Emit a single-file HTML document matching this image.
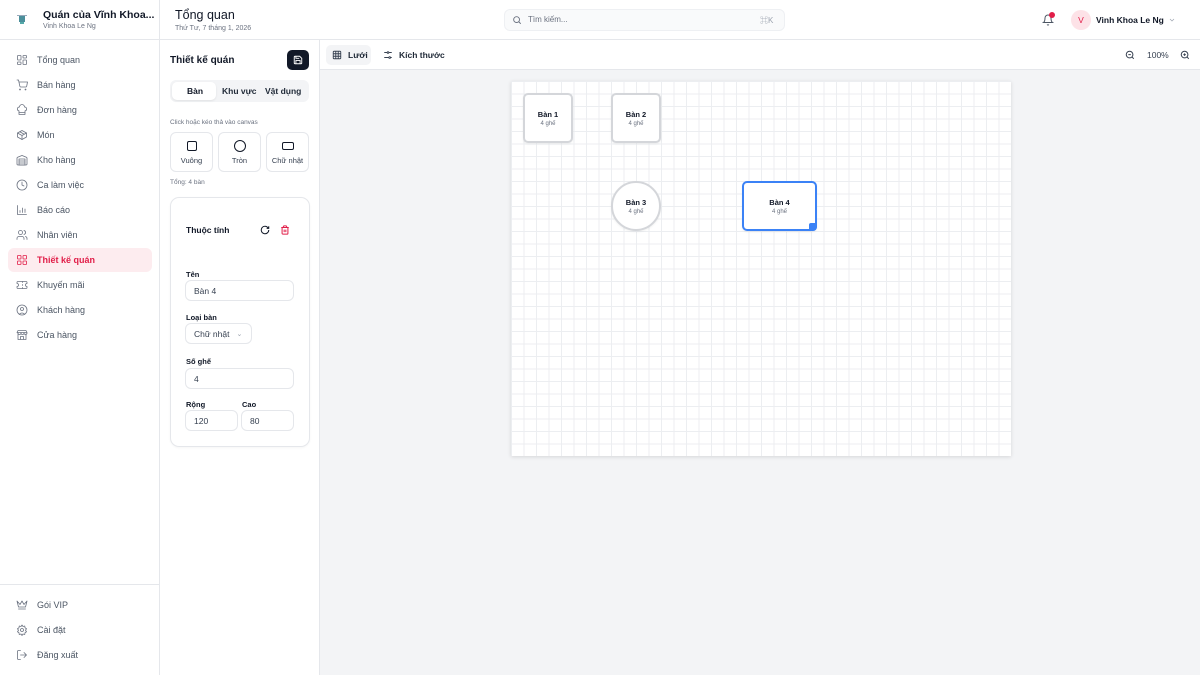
<!DOCTYPE html>
<html><head><meta charset="utf-8"><style>
*{box-sizing:border-box;margin:0;padding:0}
body{width:1200px;height:675px;overflow:hidden;font-family:"Liberation Sans","Noto Sans CJK SC",sans-serif;background:#f3f4f6;color:#111827;position:relative}
.abs{position:absolute;white-space:nowrap}
svg{display:block}
.side{left:0;top:0;width:160px;height:675px;background:#fff;border-right:1px solid #e5e7eb}
.nav{position:absolute;left:8px;width:144px;height:24px;border-radius:6px;display:flex;align-items:center;padding-left:8px;font-size:9px;color:#4b5563}
.nav svg{width:12px;height:12px;margin-right:9px;stroke:#6b7280;fill:none;stroke-width:1.6;stroke-linecap:round;stroke-linejoin:round}
.nav.act{background:#fdecef;color:#e11d48;font-weight:bold}
.nav.act svg{stroke:#e11d48}
.panel{left:160px;top:40px;width:160px;height:635px;background:#fff;border-right:1px solid #e5e7eb}
.inp{position:absolute;height:21px;border:1px solid #e5e7eb;border-radius:6px;font-size:8.5px;padding-left:8px;display:flex;align-items:center;color:#374151;background:#fff}
.lbl{position:absolute;font-size:7.5px;font-weight:bold;color:#111827}
.tb{position:absolute;background:#fff;border:2px solid #d4d6da;border-radius:5px;display:flex;flex-direction:column;align-items:center;justify-content:center;box-shadow:0 1px 2px rgba(0,0,0,.06)}
.tb b{font-size:7.5px;color:#111827}
.tb span{font-size:6px;color:#6b7280;margin-top:2px}
</style></head><body>
<div class="abs side">
  <div class="abs" style="left:16px;top:13px;width:12px;height:12px;">
    <svg width="12" height="12" viewBox="0 0 12 12"><rect x="3" y="3" width="6" height="6" fill="#4b8f9b"/><rect x="1" y="2" width="10" height="1" fill="#9ab"/><rect x="4" y="9" width="4" height="2" fill="#5aa"/></svg>
  </div>
  <div class="abs" style="left:43px;top:9px;font-size:10.5px;font-weight:bold;color:#111827">Quán của Vĩnh Khoa...</div>
  <div class="abs" style="left:43px;top:23px;font-size:7px;color:#6b7280">Vinh Khoa Le Ng</div>
  <div class="abs" style="left:0;top:39px;width:160px;height:1px;background:#e5e7eb"></div>

  <div class="nav" style="top:48px"><svg viewBox="0 0 24 24"><rect x="3" y="3" width="7" height="9" rx="1"/><rect x="14" y="3" width="7" height="5" rx="1"/><rect x="14" y="12" width="7" height="9" rx="1"/><rect x="3" y="16" width="7" height="5" rx="1"/></svg>Tổng quan</div>
  <div class="nav" style="top:73px"><svg viewBox="0 0 24 24"><circle cx="8" cy="21" r="1"/><circle cx="19" cy="21" r="1"/><path d="M2 2h3l2.7 12.4a2 2 0 0 0 2 1.6h9.7a2 2 0 0 0 2-1.6L23 6H6"/></svg>Bán hàng</div>
  <div class="nav" style="top:98px"><svg viewBox="0 0 24 24"><path d="M6 13.9A4 4 0 0 1 7 6a5 5 0 0 1 10 0 4 4 0 0 1 1 7.9V21H6z"/><path d="M6 17h12"/></svg>Đơn hàng</div>
  <div class="nav" style="top:123px"><svg viewBox="0 0 24 24"><path d="M21 8l-9-5-9 5v8l9 5 9-5z"/><path d="M3 8l9 5 9-5M12 13v8M7.5 5.5l9 5"/></svg>Món</div>
  <div class="nav" style="top:148px"><svg viewBox="0 0 24 24"><path d="M22 8.35V20a2 2 0 0 1-2 2H4a2 2 0 0 1-2-2V8.35A2 2 0 0 1 3.26 6.5l8-3.2a2 2 0 0 1 1.48 0l8 3.2A2 2 0 0 1 22 8.35z"/><path d="M6 18h12M6 14h12M6 10h12v12H6z"/></svg>Kho hàng</div>
  <div class="nav" style="top:173px"><svg viewBox="0 0 24 24"><circle cx="12" cy="12" r="10"/><path d="M12 6v6l4 2"/></svg>Ca làm việc</div>
  <div class="nav" style="top:198px"><svg viewBox="0 0 24 24"><path d="M3 3v18h18M8 17v-4M13 17V8M18 17v-7"/></svg>Báo cáo</div>
  <div class="nav" style="top:223px"><svg viewBox="0 0 24 24"><circle cx="9" cy="7" r="4"/><path d="M2 21v-2a4 4 0 0 1 4-4h6a4 4 0 0 1 4 4v2M16 3.1a4 4 0 0 1 0 7.8M22 21v-2a4 4 0 0 0-3-3.9"/></svg>Nhân viên</div>
  <div class="nav act" style="top:248px"><svg viewBox="0 0 24 24"><rect x="3" y="3" width="7" height="7" rx="1"/><rect x="14" y="3" width="7" height="7" rx="1"/><rect x="3" y="14" width="7" height="7" rx="1"/><rect x="14" y="14" width="7" height="7" rx="1"/></svg>Thiết kế quán</div>
  <div class="nav" style="top:273px"><svg viewBox="0 0 24 24"><path d="M2 9a3 3 0 0 1 0 6v2a2 2 0 0 0 2 2h16a2 2 0 0 0 2-2v-2a3 3 0 0 1 0-6V7a2 2 0 0 0-2-2H4a2 2 0 0 0-2 2z"/><path d="M13 5v2M13 17v2M13 11v2"/></svg>Khuyến mãi</div>
  <div class="nav" style="top:298px"><svg viewBox="0 0 24 24"><circle cx="12" cy="12" r="10"/><circle cx="12" cy="10" r="3"/><path d="M7 20.7a6 6 0 0 1 10 0"/></svg>Khách hàng</div>
  <div class="nav" style="top:323px"><svg viewBox="0 0 24 24"><path d="M2 7l2-4h16l2 4M4 10v11h16V10M2 7h20v1a3 3 0 0 1-6 0 3 3 0 0 1-6 0 3 3 0 0 1-6 0 3 3 0 0 1-2-1M9 21v-6h6v6"/></svg>Cửa hàng</div>

  <div class="abs" style="left:0;top:584px;width:160px;height:1px;background:#e5e7eb"></div>
  <div class="nav" style="top:593px"><svg viewBox="0 0 24 24"><path d="M2 4l3 12h14l3-12-6 7-4-7-4 7zM5 20h14"/></svg>Gói VIP</div>
  <div class="nav" style="top:618px"><svg viewBox="0 0 24 24"><circle cx="12" cy="12" r="3"/><path d="M12 2l2 3 3.5-1 .5 3.5 3 2-2 3 2 3-3 2-.5 3.5-3.5-1-2 3-2-3-3.5 1L6 17.5l-3-2 2-3-2-3 3-2L6.5 4 10 5z"/></svg>Cài đặt</div>
  <div class="nav" style="top:643px"><svg viewBox="0 0 24 24"><path d="M9 21H5a2 2 0 0 1-2-2V5a2 2 0 0 1 2-2h4M16 17l5-5-5-5M21 12H9"/></svg>Đăng xuất</div>
</div>

<!-- header -->
<div class="abs" style="left:160px;top:0;width:1040px;height:40px;background:#fff;border-bottom:1px solid #e5e7eb"></div>
<div class="abs" style="left:175px;top:8px;font-size:12.5px;color:#111827">Tổng quan</div>
<div class="abs" style="left:175px;top:25px;font-size:7px;color:#6b7280">Thứ Tư, 7 tháng 1, 2026</div>
<div class="abs" style="left:504px;top:9px;width:281px;height:22px;border:1px solid #eef0f3;border-radius:6px;background:#f9fafb"></div>
<svg class="abs" style="left:512px;top:15px" width="10" height="10" viewBox="0 0 24 24" fill="none" stroke="#6b7280" stroke-width="2.2"><circle cx="11" cy="11" r="7"/><path d="M21 21l-4.5-4.5"/></svg>
<div class="abs" style="left:528px;top:15px;font-size:8px;color:#6b7280">Tìm kiếm...</div>
<div class="abs" style="left:760px;top:15px;font-size:8px;color:#9ca3af">⌘K</div>
<svg class="abs" style="left:1042px;top:14px" width="12" height="12" viewBox="0 0 24 24" fill="none" stroke="#4b5563" stroke-width="2"><path d="M6 8a6 6 0 0 1 12 0c0 7 3 9 3 9H3s3-2 3-9M10.3 21a1.9 1.9 0 0 0 3.4 0"/></svg>
<div class="abs" style="left:1049px;top:12px;width:6px;height:6px;border-radius:50%;background:#e11d48"></div>
<div class="abs" style="left:1071px;top:10px;width:20px;height:20px;border-radius:50%;background:#fde2e7;color:#e11d48;font-size:8.5px;display:flex;align-items:center;justify-content:center">V</div>
<div class="abs" style="left:1096px;top:15px;font-size:8.5px;font-weight:bold;color:#111827">Vinh Khoa Le Ng</div>
<svg class="abs" style="left:1168px;top:16px" width="8" height="8" viewBox="0 0 24 24" fill="none" stroke="#9ca3af" stroke-width="2"><path d="M6 9l6 6 6-6"/></svg>

<!-- panel -->
<div class="abs panel">
  <div class="abs" style="left:10px;top:15px;font-size:10px;font-weight:bold">Thiết kế quán</div>
  <div class="abs" style="left:127px;top:10px;width:22px;height:20px;background:#111827;border-radius:5px;display:flex;align-items:center;justify-content:center"><svg width="10" height="10" viewBox="0 0 24 24" fill="none" stroke="#fff" stroke-width="2.2"><path d="M19 21H5a2 2 0 0 1-2-2V5a2 2 0 0 1 2-2h11l5 5v11a2 2 0 0 1-2 2z"/><path d="M17 21v-8H7v8M7 3v5h8"/></svg></div>
  <div class="abs" style="left:10px;top:40px;width:139px;height:22px;background:#f3f4f6;border-radius:6px"></div>
  <div class="abs" style="left:12px;top:42px;width:44px;height:18px;background:#fff;border-radius:5px;box-shadow:0 1px 2px rgba(0,0,0,.08)"></div>
  <div class="abs" style="left:27px;top:46px;font-size:8.5px;font-weight:bold">Bàn</div>
  <div class="abs" style="left:62px;top:46px;font-size:8.5px;font-weight:bold;color:#1f2937">Khu vực</div>
  <div class="abs" style="left:105px;top:46px;font-size:8.5px;font-weight:bold;color:#1f2937">Vật dụng</div>
  <div class="abs" style="left:10px;top:79px;font-size:6.5px;color:#6b7280">Click hoặc kéo thả vào canvas</div>
  <div class="abs" style="left:10px;top:92px;width:43px;height:40px;border:1px solid #e5e7eb;border-radius:6px"></div>
  <div class="abs" style="left:58px;top:92px;width:43px;height:40px;border:1px solid #e5e7eb;border-radius:6px"></div>
  <div class="abs" style="left:106px;top:92px;width:43px;height:40px;border:1px solid #e5e7eb;border-radius:6px"></div>
  <div class="abs" style="left:27px;top:101px;width:10px;height:10px;border:1.3px solid #111827;border-radius:2px"></div>
  <div class="abs" style="left:74px;top:100px;width:12px;height:12px;border:1.3px solid #111827;border-radius:50%"></div>
  <div class="abs" style="left:122px;top:102px;width:12px;height:8px;border:1.3px solid #111827;border-radius:2px"></div>
  <div class="abs" style="left:10px;top:116px;width:43px;text-align:center;font-size:7.5px;color:#374151">Vuông</div>
  <div class="abs" style="left:58px;top:116px;width:43px;text-align:center;font-size:7.5px;color:#374151">Tròn</div>
  <div class="abs" style="left:106px;top:116px;width:43px;text-align:center;font-size:7.5px;color:#374151">Chữ nhật</div>
  <div class="abs" style="left:10px;top:139px;font-size:6.5px;color:#6b7280">Tổng: 4 bàn</div>

  <div class="abs" style="left:10px;top:157px;width:140px;height:250px;border:1px solid #e5e7eb;border-radius:9px;box-shadow:0 1px 2px rgba(0,0,0,.04)">
    <div class="abs" style="left:15px;top:27px;font-size:8.5px;font-weight:bold">Thuộc tính</div>
    <svg class="abs" style="left:89px;top:27px" width="10" height="10" viewBox="0 0 24 24" fill="none" stroke="#111827" stroke-width="2.4"><path d="M21 12a9 9 0 1 1-3-6.7L21 8M21 3v5h-5"/></svg>
    <svg class="abs" style="left:109px;top:27px" width="10" height="10" viewBox="0 0 24 24" fill="none" stroke="#e11d48" stroke-width="2.4"><path d="M3 6h18M19 6v14a2 2 0 0 1-2 2H7a2 2 0 0 1-2-2V6M8 6V4a2 2 0 0 1 2-2h4a2 2 0 0 1 2 2v2M10 11v6M14 11v6"/></svg>
    <div class="lbl" style="left:15px;top:72px">Tên</div>
    <div class="inp" style="left:14px;top:82px;width:109px">Bàn 4</div>
    <div class="lbl" style="left:15px;top:115px">Loại bàn</div>
    <div class="inp" style="left:14px;top:125px;width:67px">Chữ nhật <span style="color:#9ca3af;margin-left:7px;font-size:7px">⌄</span></div>
    <div class="lbl" style="left:15px;top:159px">Số ghế</div>
    <div class="inp" style="left:14px;top:170px;width:109px">4</div>
    <div class="lbl" style="left:15px;top:202px">Rộng</div>
    <div class="lbl" style="left:71px;top:202px">Cao</div>
    <div class="inp" style="left:14px;top:212px;width:53px">120</div>
    <div class="inp" style="left:70px;top:212px;width:53px">80</div>
  </div>
</div>

<!-- toolbar -->
<div class="abs" style="left:320px;top:40px;width:880px;height:30px;background:#fff;border-bottom:1px solid #e5e7eb"></div>
<div class="abs" style="left:326px;top:45px;width:45px;height:20px;background:#f3f4f6;border-radius:5px"></div>
<svg class="abs" style="left:332px;top:50px" width="10" height="10" viewBox="0 0 24 24" fill="none" stroke="#374151" stroke-width="2.2"><rect x="3" y="3" width="18" height="18" rx="2"/><path d="M3 9h18M3 15h18M9 3v18M15 3v18"/></svg>
<div class="abs" style="left:348px;top:50px;font-size:8.5px;color:#1f2937;font-weight:bold">Lưới</div>
<svg class="abs" style="left:383px;top:50px" width="10" height="10" viewBox="0 0 24 24" fill="none" stroke="#374151" stroke-width="2.2"><path d="M3 6h7M14 6h7M3 18h11M18 18h3"/><circle cx="12" cy="6" r="2"/><circle cx="16" cy="18" r="2"/></svg>
<div class="abs" style="left:399px;top:50px;font-size:8.5px;color:#1f2937;font-weight:bold">Kích thước</div>
<svg class="abs" style="left:1125px;top:50px" width="10" height="10" viewBox="0 0 24 24" fill="none" stroke="#374151" stroke-width="2.4"><circle cx="11" cy="11" r="8"/><path d="M21 21l-4.3-4.3M8 11h6"/></svg>
<div class="abs" style="left:1147px;top:50px;font-size:8.5px;color:#374151">100%</div>
<svg class="abs" style="left:1180px;top:50px" width="10" height="10" viewBox="0 0 24 24" fill="none" stroke="#374151" stroke-width="2.4"><circle cx="11" cy="11" r="8"/><path d="M21 21l-4.3-4.3M8 11h6M11 8v6"/></svg>

<!-- canvas -->
<div class="abs" style="left:511px;top:81px;width:500px;height:375px;background-color:#fff;background-image:linear-gradient(#eceef1 1px,transparent 1px),linear-gradient(90deg,#eceef1 1px,transparent 1px);background-size:12.5px 12.5px;box-shadow:0 1px 4px rgba(0,0,0,.12)">
  <div class="tb" style="left:12px;top:12px;width:50px;height:50px"><b>Bàn 1</b><span>4 ghế</span></div>
  <div class="tb" style="left:100px;top:12px;width:50px;height:50px"><b>Bàn 2</b><span>4 ghế</span></div>
  <div class="tb" style="left:100px;top:100px;width:50px;height:50px;border-radius:50%"><b>Bàn 3</b><span>4 ghế</span></div>
  <div class="tb" style="left:231px;top:100px;width:75px;height:50px;border-color:#3b82f6"><b>Bàn 4</b><span>4 ghế</span>
    <div class="abs" style="right:-2px;bottom:-2px;width:8px;height:8px;background:#3b82f6;border-radius:2px 0 4px 0"></div></div>
</div>
</body></html>
